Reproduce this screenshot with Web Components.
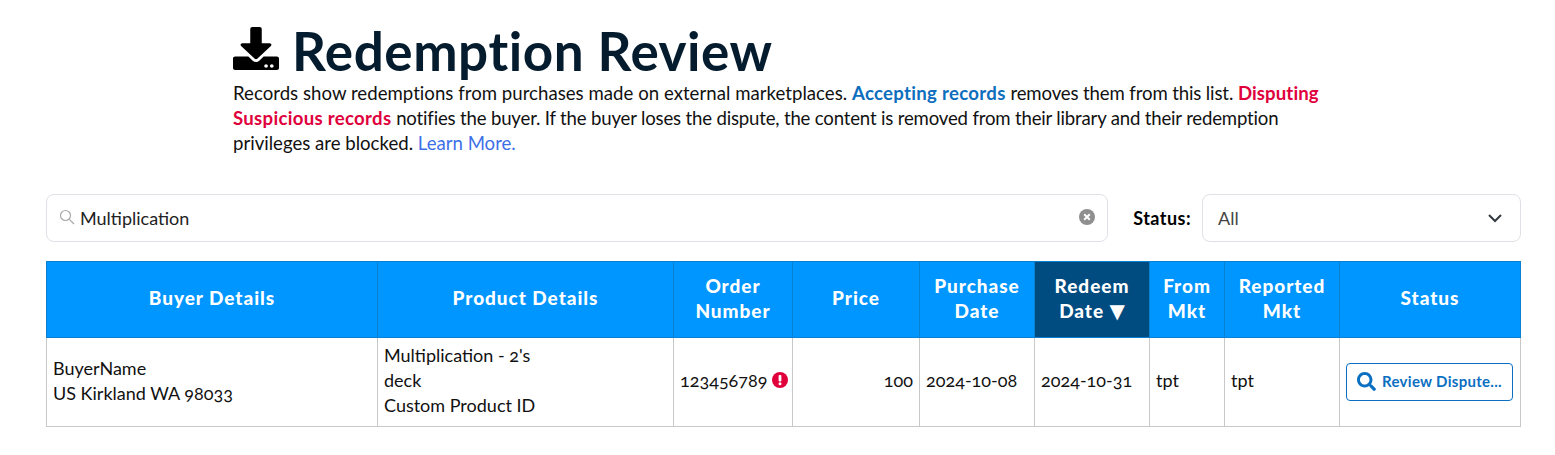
<!DOCTYPE html>
<html>
<head>
<meta charset="utf-8">
<title>Redemption Review</title>
<style>
  body {
    margin: 0;
    background: #fff;
    font-family: 'Lato', 'Liberation Sans', sans-serif;
    color: #111;
  }
</style>
</head>
<body>
<review-page></review-page>

<script>
class ReviewHeader extends HTMLElement {
  constructor () {
    super()
    this.shadow = this.attachShadow({ mode: 'open' })
  }

  connectedCallback () {
    this.shadow.innerHTML =
    /* html */`
    <style>
      :host {
        display: block;
        width: 1100px;
        margin-left: 233px;
        padding-top: 21px;
      }
      .title {
        display: flex;
        align-items: center;
        gap: 13px;
        height: 60px;
      }
      h1 {
        margin: 0;
        font-size: 53px;
        line-height: 60px;
        font-weight: 700;
        color: #041c2e;
        letter-spacing: 0.55px;
      }
      svg { display: block; width: 46px; height: 43px; margin-top: -5px; }
      p {
        margin: 0;
        font-size: 18.6px;
        line-height: 25px;
        color: #111;
      }
      .ok { color: #0d6ebd; font-weight: 700; letter-spacing: 0.3px; }
      .bad { color: #e0003c; font-weight: 700; letter-spacing: 0.1px; }
      .bad.wide { letter-spacing: 0.3px; }
      .open { letter-spacing: 0.03px; }
      .snug { letter-spacing: -0.13px; }
      .tight { letter-spacing: -0.18px; }
      a { color: #3d6fe8; text-decoration: none; }
    </style>
    <div class="title">
      <svg viewBox="0 0 512 512" preserveAspectRatio="none"><path fill="#000" d="M216 0h80c13.3 0 24 10.7 24 24v168h87.700c17.800 0 26.700 21.500 14.100 34.100L269.700 378.300c-7.500 7.500-19.800 7.500-27.300 0L90.100 226.100c-12.600-12.600-3.700-34.100 14.100-34.100H192V24c0-13.300 10.700-24 24-24zm296 376v112c0 13.300-10.700 24-24 24H24c-13.300 0-24-10.700-24-24V376c0-13.300 10.700-24 24-24h146.700l49 49c20.100 20.100 52.500 20.100 72.600 0l49-49H488c13.300 0 24 10.700 24 24zm-124 88c0-11-9-20-20-20s-20 9-20 20 9 20 20 20 20-9 20-20zm64 0c0-11-9-20-20-20s-20 9-20 20 9 20 20 20 20-9 20-20z"/></svg>
      <h1>Redemption Review</h1>
    </div>
    <p><span class="open">Records show redemptions from purchases made on external marketplaces.</span> <span class="ok">Accepting records</span> <span class="snug">removes them from this list.</span> <span class="bad">Disputing</span><br><span class="bad wide">Suspicious records</span> <span class="tight">notifies the buyer. If the buyer loses the dispute, the content is removed from their library and their redemption</span><br>privileges are blocked. <a href="#">Learn More.</a></p>
    `
  }
}

class SearchBox extends HTMLElement {
  constructor () {
    super()
    this.shadow = this.attachShadow({ mode: 'open' })
  }

  connectedCallback () {
    this.shadow.innerHTML =
    /* html */`
    <style>
      :host {
        display: flex;
        align-items: center;
        box-sizing: border-box;
        flex: 1;
        height: 48px;
        border: 1px solid #dfe1e6;
        border-radius: 8px;
        padding: 0 12px;
        font-size: 18px;
        color: #222;
      }
      .text { flex: 1; margin-left: 5px; }
      svg { display: block; }
    </style>
    <svg width="16" height="16" viewBox="0 0 16 16" fill="none" stroke="#a8a8a8" stroke-width="1.200" style="margin-top:-3px"><circle cx="6.500" cy="6.500" r="5"/><path d="M10.300 10.300 15 15"/></svg>
    <span class="text"><slot></slot></span>
    <svg width="16" height="16" viewBox="0 0 16 16" style="margin-top:-2px"><circle cx="8" cy="8" r="8" fill="#8f8f8f"/><path d="M5.200 5.200l5.600 5.600m0-5.600l-5.600 5.600" stroke="#fff" stroke-width="2"/></svg>
    `
  }
}

class StatusSelect extends HTMLElement {
  constructor () {
    super()
    this.shadow = this.attachShadow({ mode: 'open' })
  }

  connectedCallback () {
    this.shadow.innerHTML =
    /* html */`
    <style>
      :host {
        display: flex;
        align-items: center;
        gap: 11px;
        font-size: 18px;
      }
      label { font-weight: 700; color: #000; letter-spacing: 0.45px; }
      .box {
        display: flex;
        align-items: center;
        justify-content: space-between;
        box-sizing: border-box;
        width: 319px;
        height: 48px;
        border: 1px solid #dfe1e6;
        border-radius: 8px;
        padding: 0 17px 0 15px;
        color: #444;
      }
      svg { display: block; }
    </style>
    <label>Status:</label>
    <div class="box">
      <span><slot></slot></span>
      <svg width="16" height="10" viewBox="0 0 16 10" fill="none" stroke="#343a40" stroke-width="2"><path d="M2 2l6 6 6-6"/></svg>
    </div>
    `
  }
}

class ReviewButton extends HTMLElement {
  constructor () {
    super()
    this.shadow = this.attachShadow({ mode: 'open' })
  }

  connectedCallback () {
    this.shadow.innerHTML =
    /* html */`
    <style>
      :host {
        display: flex;
        align-items: center;
        justify-content: center;
        gap: 6px;
        box-sizing: border-box;
        width: 167px;
        height: 38px;
        padding-bottom: 1px;
        border: 1px solid #0b6fc2;
        border-radius: 4px;
        color: #0b6fc2;
        font-size: 15px;
        font-weight: 700;
        letter-spacing: 0.3px;
        white-space: nowrap;
      }
      svg { display: block; }
    </style>
    <svg width="19" height="19" viewBox="0 0 512 512"><path fill="#0b6fc2" d="M505 442.700L405.300 343c-4.500-4.500-10.600-7-17-7H372c27.600-35.300 44-79.700 44-128C416 93.100 322.900 0 208 0S0 93.100 0 208s93.100 208 208 208c48.300 0 92.700-16.400 128-44v16.300c0 6.400 2.500 12.500 7 17l99.700 99.700c9.400 9.400 24.600 9.400 33.900 0l28.300-28.300c9.400-9.400 9.400-24.600.1-34zM208 336c-70.700 0-128-57.200-128-128 0-70.700 57.200-128 128-128 70.700 0 128 57.200 128 128 0 70.700-57.200 128-128 128z"/></svg>
    <span><slot></slot></span>
    `
  }
}

class ReviewTable extends HTMLElement {
  constructor () {
    super()
    this.shadow = this.attachShadow({ mode: 'open' })
    this.data = {}
  }

  connectedCallback () {
    this.loadData()
    this.render()
  }

  loadData () {
    this.data = {
      columns: [
        ['Buyer Details', 331], ['Product Details', 296], ['Order<br>Number', 119],
        ['Price', 127], ['Purchase<br>Date', 115], ['Redeem<br>Date <span class="arrow">▼</span>', 115],
        ['From<br>Mkt', 75], ['Reported<br>Mkt', 115], ['Status', 181]
      ]
    }
  }

  render () {
    const heads = this.data.columns.map(([label], i) =>
      `<th class="${i === 5 ? 'sorted' : ''}">${label}</th>`).join('')
    const cols = this.data.columns.map(([, w]) => `<col style="width:${w}px">`).join('')

    this.shadow.innerHTML =
    /* html */`
    <style>
      :host {
        display: block;
        margin: 19px 34px 0 46px;
        font-variant-numeric: oldstyle-nums;
      }
      table {
        border-collapse: collapse;
        table-layout: fixed;
        width: 1474px;
        font-size: 18px;
        line-height: 25px;
      }
      th {
        background: #0096ff;
        color: #fff;
        height: 76px;
        padding: 0 2px 4px;
        box-sizing: border-box;
        border: 1px solid #0a80d2;
        font-size: 19px;
        font-weight: 900;
        letter-spacing: 0.95px;
        text-align: center;
      }
      th.sorted { background: #004b80; }
      .arrow {
        font-family: 'DejaVu Sans', sans-serif;
        font-size: 20px;
        line-height: 20px;
        letter-spacing: 0;
      }
      td {
        height: 89px;
        padding: 0 6px 3px;
        box-sizing: border-box;
        border: 1px solid #c8c8c8;
        color: #111;
      }
      td.action { padding-bottom: 0; }
      .num { white-space: nowrap; }
      .right { text-align: right; }
      .flag {
        display: inline-block;
        vertical-align: -1px;
      }
    </style>
    <table>
      <colgroup>${cols}</colgroup>
      <thead><tr>${heads}</tr></thead>
      <tbody>
        <tr>
          <td>BuyerName<br>US Kirkland WA 98033</td>
          <td>Multiplication - 2's<br>deck<br>Custom Product ID</td>
          <td class="num">123456789 <svg class="flag" width="16" height="16" viewBox="0 0 16 16"><circle cx="8" cy="8" r="8" fill="#e0003c"/><rect x="6.600" y="3" width="2.800" height="6.500" rx="1" fill="#fff"/><circle cx="8" cy="11.800" r="1.500" fill="#fff"/></svg></td>
          <td class="num right">100</td>
          <td class="num">2024-10-08</td>
          <td class="num">2024-10-31</td>
          <td>tpt</td>
          <td>tpt</td>
          <td class="action"><review-button>Review Dispute...</review-button></td>
        </tr>
      </tbody>
    </table>
    `
  }
}

class ReviewPage extends HTMLElement {
  constructor () {
    super()
    this.shadow = this.attachShadow({ mode: 'open' })
  }

  connectedCallback () {
    this.shadow.innerHTML =
    /* html */`
    <style>
      :host { display: block; }
      .filters {
        display: flex;
        align-items: center;
        gap: 25px;
        margin: 38px 34px 0 46px;
      }
    </style>
    <review-header></review-header>
    <div class="filters">
      <search-box>Multiplication</search-box>
      <status-select>All</status-select>
    </div>
    <review-table></review-table>
    `
  }
}

customElements.define('review-header', ReviewHeader)
customElements.define('search-box', SearchBox)
customElements.define('status-select', StatusSelect)
customElements.define('review-button', ReviewButton)
customElements.define('review-table', ReviewTable)
customElements.define('review-page', ReviewPage)
</script>
</body>
</html>
